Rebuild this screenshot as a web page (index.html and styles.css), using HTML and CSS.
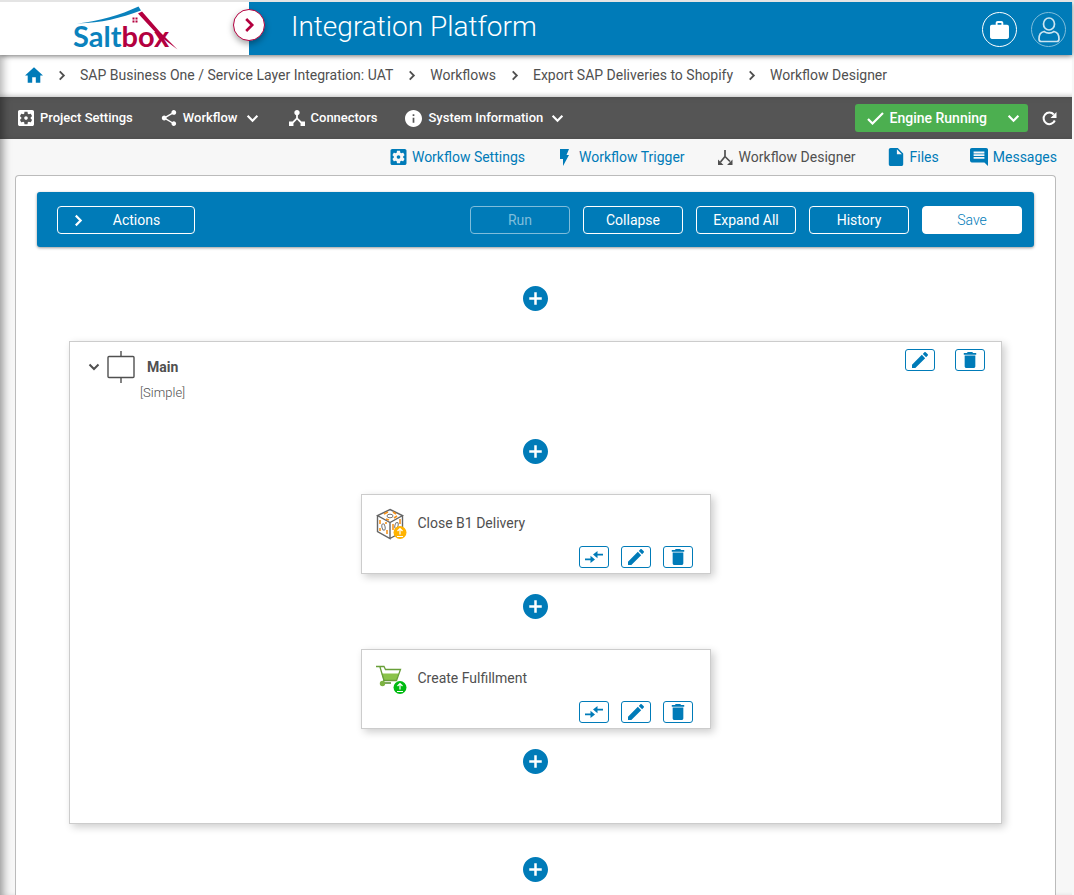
FILE: index.html
```html
<!DOCTYPE html>
<html lang="en">
<head>
  <meta charset="UTF-8">
  <meta name="viewport" content="width=device-width, initial-scale=1.0">
  <title>Workflow Designer - Integration Platform</title>
  <link rel="stylesheet" href="styles.css">
</head>
<body>
  <!-- shared icons -->
  <svg class="sprite" aria-hidden="true">
    <symbol id="i-settings" viewBox="3 3 18 18"><path d="M12 10c-1.1 0-2 .9-2 2s.9 2 2 2 2-.9 2-2-.9-2-2-2zm7-7H5c-1.11 0-2 .9-2 2v14c0 1.1.89 2 2 2h14c1.11 0 2-.9 2-2V5c0-1.1-.89-2-2-2zm-1.75 9c0 .23-.02.46-.05.68l1.48 1.16c.13.11.17.3.08.45l-1.4 2.42c-.09.15-.27.21-.43.15l-1.74-.7c-.36.28-.76.51-1.18.69l-.26 1.85c-.03.17-.18.3-.35.3h-2.8c-.17 0-.32-.13-.35-.29l-.26-1.85c-.43-.18-.82-.41-1.18-.69l-1.74.7c-.16.06-.34 0-.43-.15l-1.4-2.42c-.09-.15-.05-.34.08-.45l1.48-1.16c-.03-.23-.05-.46-.05-.69 0-.23.02-.46.05-.68l-1.48-1.16c-.13-.11-.17-.3-.08-.45l1.4-2.42c.09-.15.27-.21.43-.15l1.74.7c.36-.28.76-.51 1.18-.69l.26-1.85c.03-.17.18-.3.35-.3h2.8c.17 0 .32.13.35.29l.26 1.85c.43.18.82.41 1.18.69l1.74-.7c.16-.06.34 0 .43.15l1.4 2.42c.09.15.05.34-.08.45l-1.48 1.16c.03.23.05.46.05.69z"/></symbol>
    <symbol id="i-edit" viewBox="3 3 18 18"><path d="M3 17.25V21h3.75L17.81 9.94l-3.75-3.75L3 17.25zM20.71 7.04c.39-.39.39-1.02 0-1.41l-2.34-2.34c-.39-.39-1.02-.39-1.41 0l-1.83 1.83 3.75 3.75 1.83-1.83z"/></symbol>
    <symbol id="i-delete" viewBox="3 3 18 18"><path d="M6 19c0 1.1.9 2 2 2h8c1.1 0 2-.9 2-2V7H6v12zM19 4h-3.5l-1-1h-5l-1 1H5v2h14V4z"/></symbol>
    <symbol id="i-map" viewBox="0 0 18 12"><path d="M0 7.6h5.500V4.800L10 8.400 5.500 12V9.200H0zM18 2.800h-5.500V0L8 3.600l4.500 3.600V4.400H18z"/></symbol>
    <symbol id="i-down" viewBox="0 0 12 12"><path d="M1.500 3.500 6 8l4.500-4.500" fill="none" stroke="currentColor" stroke-width="2"/></symbol>
    <symbol id="i-right" viewBox="0 0 8 12"><path d="M1.500 1.500 6 6l-4.500 4.500" fill="none" stroke="currentColor" stroke-width="2"/></symbol>
    <symbol id="i-plus" viewBox="2 2 20 20"><path d="M12 2C6.480 2 2 6.480 2 12s4.480 10 10 10 10-4.480 10-10S17.520 2 12 2zm5 11h-4v4h-2v-4H7v-2h4V7h2v4h4v2z"/></symbol>
  </svg>

  <header class="top">
    <a class="logo" href="#" aria-label="Saltbox">
      <svg width="110" height="50" viewBox="70 5 110 50">
        <text class="logo-text" x="73" y="47"><tspan class="logo-blue">Salt</tspan><tspan class="logo-red">box</tspan></text>
        <path class="logo-blue" d="M77 23.500C100 21 120 15 138.500 6.500L141 10.500C120 18 102 23 77 23.500z"/>
        <path class="logo-red" d="M138 13.500 142 11.500 160 32 177.500 49.500 157 34z"/>
        <path class="logo-red" d="M132.500 17.500h2v2h-2zM135.500 17.500h2v2h-2zM132.500 20.500h2v2h-2zM135.500 20.500h2v2h-2z"/>
      </svg>
    </a>
    <div class="brand">
      <button class="expand" type="button" aria-label="Expand menu"><svg width="11" height="16"><use href="#i-right"/></svg></button>
      <h1>Integration Platform</h1>
      <button class="round" type="button" aria-label="Workspace">
        <svg width="19" height="18" viewBox="2 2 20 19"><path d="M20 6h-4V4c0-1.110-.89-2-2-2h-4c-1.110 0-2 .89-2 2v2H4c-1.110 0-2 .89-2 2v11c0 1.110.89 2 2 2h16c1.110 0 2-.89 2-2V8c0-1.110-.89-2-2-2zm-6 0h-4V4h4v2z"/></svg>
      </button>
      <button class="round user" type="button" aria-label="Account">
        <svg width="24" height="26" viewBox="0 0 24 26" fill="none" stroke="currentColor" stroke-width="1.700"><ellipse cx="12" cy="7" rx="5.500" ry="6"/><path d="M7 14.500c-3 .5-5 3.500-5 7.500 0 1.500.8 2.500 2.300 2.500h15.400c1.500 0 2.300-1 2.300-2.500 0-4-2-7-5-7.500-3 2-7 2-10 0z"/></svg>
      </button>
    </div>
  </header>

  <div class="page">
    <nav class="crumbs" aria-label="Breadcrumb">
      <a href="#" aria-label="Home"><svg width="18" height="16" viewBox="2 3 20 17"><path d="M10 20v-6h4v6h5v-8h3L12 3 2 12h3v8z"/></svg></a>
      <svg class="sep" width="8" height="11"><use href="#i-right"/></svg>
      <a href="#">SAP Business One / Service Layer Integration: UAT</a>
      <svg class="sep" width="8" height="11"><use href="#i-right"/></svg>
      <a href="#">Workflows</a>
      <svg class="sep" width="8" height="11"><use href="#i-right"/></svg>
      <a href="#">Export SAP Deliveries to Shopify</a>
      <svg class="sep" width="8" height="11"><use href="#i-right"/></svg>
      <span>Workflow Designer</span>
    </nav>

    <div class="menu">
      <button type="button"><svg width="16" height="16"><use href="#i-settings"/></svg>Project Settings</button>
      <button type="button"><svg width="16" height="16" viewBox="3 2 18 20"><path d="M18 16.080c-.76 0-1.440.3-1.960.77L8.910 12.700c.05-.23.09-.46.09-.7s-.04-.47-.09-.7l7.050-4.110c.54.5 1.250.81 2.040.81 1.660 0 3-1.340 3-3s-1.340-3-3-3-3 1.340-3 3c0 .24.04.47.09.7L8.040 9.810C7.500 9.310 6.790 9 6 9c-1.660 0-3 1.340-3 3s1.340 3 3 3c.79 0 1.500-.31 2.040-.81l7.120 4.160c-.05.21-.08.43-.08.65 0 1.610 1.310 2.920 2.920 2.920s2.920-1.310 2.920-2.920-1.310-2.920-2.920-2.920z"/></svg>Workflow<svg class="caret" width="13" height="13"><use href="#i-down"/></svg></button>
      <button type="button"><svg width="16" height="16" viewBox="3 3 18 18"><path d="M17 16l-4-4V8.820C14.160 8.400 15 7.300 15 6c0-1.660-1.340-3-3-3S9 4.340 9 6c0 1.300.84 2.400 2 2.820V12l-4 4H3v5h5v-3.050l4-4.200 4 4.200V21h5v-5h-4z"/></svg>Connectors</button>
      <button type="button"><svg width="17" height="17" viewBox="2 2 20 20"><path d="M12 2C6.480 2 2 6.480 2 12s4.480 10 10 10 10-4.480 10-10S17.520 2 12 2zm1 15h-2v-6h2v6zm0-8h-2V7h2v2z"/></svg>System Information<svg class="caret" width="13" height="13"><use href="#i-down"/></svg></button>
      <button class="engine" type="button"><svg width="17" height="13" viewBox="0 0 17 13"><path d="M1 7l4.500 4.500L16 1" fill="none" stroke="currentColor" stroke-width="2.200"/></svg>Engine Running<svg class="caret" width="13" height="13"><use href="#i-down"/></svg></button>
      <button class="refresh" type="button" aria-label="Refresh"><svg width="15" height="15" viewBox="0 0 15 15"><path d="M12.800 9.500A5.800 5.800 0 1 1 11.800 3.500" fill="none" stroke="currentColor" stroke-width="2"/><path d="M14.500 1v6h-6z"/></svg></button>
    </div>

    <nav class="tabs" aria-label="Workflow">
      <a href="#"><svg width="17" height="16"><use href="#i-settings"/></svg>Workflow Settings</a>
      <a href="#"><svg width="18" height="18" viewBox="0 0 18 18"><path d="M4 1h9l-2.500 6H13L7 18v-7H4z"/></svg>Workflow Trigger</a>
      <a class="active" href="#" aria-current="page"><svg width="18" height="18" viewBox="0 0 18 18"><path d="M9 2v6.500L4.500 14M9 8.500l5 5" fill="none" stroke="currentColor" stroke-width="1.700"/><path d="M2 11.500V17h5.500zM16.500 11.500V17H11z"/></svg>Workflow Designer</a>
      <a href="#"><svg width="18" height="18" viewBox="3 2 18 20"><path d="M6 2c-1.100 0-2 .9-2 2v16c0 1.100.9 2 2 2h12c1.100 0 2-.9 2-2V8l-6-6H6zm7 7V3.500L18.500 9H13z"/></svg>Files</a>
      <a href="#"><svg width="18" height="18" viewBox="2 2 20 20"><path d="M22 4c0-1.100-.9-2-2-2H4c-1.100 0-2 .9-2 2v12c0 1.100.9 2 2 2h14l4 4zM18 14H6v-2h12v2zm0-3H6V9h12v2zm0-3H6V6h12v2z"/></svg>Messages</a>
    </nav>

    <main class="panel">
      <div class="toolbar">
        <button class="actions" type="button"><svg width="9" height="13"><use href="#i-right"/></svg><span>Actions</span></button>
        <button type="button" disabled>Run</button>
        <button type="button">Collapse</button>
        <button type="button">Expand All</button>
        <button type="button">History</button>
        <button class="save" type="button">Save</button>
      </div>

      <div class="flow">
        <button class="add" type="button" aria-label="Add block"><svg width="25" height="25"><use href="#i-plus"/></svg></button>

        <section class="block">
          <header class="block-head">
            <button class="toggle" type="button" aria-label="Collapse block"><svg width="12" height="12"><use href="#i-down"/></svg></button>
            <svg width="28" height="32" viewBox="0 0 28 32" fill="none" stroke="currentColor" stroke-width="1.400"><rect x="1" y="5.500" width="26" height="21" rx="1"/><path d="M14 0v5.500M14 26.500V32"/></svg>
            <h2>Main</h2>
            <div class="tools">
              <button type="button" aria-label="Edit"><svg width="16" height="16"><use href="#i-edit"/></svg></button>
              <button type="button" aria-label="Delete"><svg width="16" height="16"><use href="#i-delete"/></svg></button>
            </div>
          </header>
          <p class="kind">[Simple]</p>

          <div class="steps">
            <button class="add" type="button" aria-label="Add step"><svg width="25" height="25"><use href="#i-plus"/></svg></button>

            <article class="step">
              <div class="step-name">
                <svg width="32" height="32" viewBox="0 0 32 32" fill="none">
                  <path d="M14 1.500 26.500 7.500 14 14.500 1.500 7.500zM1.500 7.500v16L14 30.500v-16M26.500 7.500v16L14 30.500" stroke="#666" stroke-width="1.400"/>
                  <ellipse cx="14" cy="8" rx="3" ry="1.800" stroke="#777"/>
                  <ellipse cx="7.500" cy="19" rx="1.600" ry="3.200" stroke="#777" transform="rotate(-12 7.500 19)"/>
                  <ellipse cx="20.500" cy="17.500" rx="1.600" ry="3" stroke="#777" transform="rotate(15 20.500 17.500)"/>
                  <path d="M8 6l4-2M10 11l3 1M17 4l3 2M18 10l3-2M4 12v4M4 20v3M10 14v2M11 22v4M17 16v6M24 11v5" stroke="#f7941d" stroke-width="1.600"/>
                  <circle cx="24" cy="24.500" r="6.500" fill="#ffb300"/>
                  <path d="M24 26.500v-6M21.500 23l2.500-2.500L26.500 23M21 28.500h6" stroke="#fff" stroke-width="1.200"/>
                </svg>
                <h3>Close B1 Delivery</h3>
              </div>
              <div class="tools">
                <button type="button" aria-label="Map fields"><svg width="18" height="12"><use href="#i-map"/></svg></button>
                <button type="button" aria-label="Edit"><svg width="16" height="16"><use href="#i-edit"/></svg></button>
                <button type="button" aria-label="Delete"><svg width="16" height="16"><use href="#i-delete"/></svg></button>
              </div>
            </article>

            <button class="add" type="button" aria-label="Add step"><svg width="25" height="25"><use href="#i-plus"/></svg></button>

            <article class="step">
              <div class="step-name">
                <svg width="32" height="32" viewBox="0 0 32 32" fill="none">
                  <path d="M5.500 10.500H23L20.500 17H7.500z" fill="#8bc34a"/>
                  <path d="M0 3.500h8l1.500 3H24.500L20.500 17.500H8L4 4" stroke="#689f38" stroke-width="1.300"/>
                  <path d="M8 17.500 6.500 20H15" stroke="#558b2f" stroke-width="1.300"/>
                  <circle cx="6.500" cy="20.500" r="2.700" fill="#7cb342"/>
                  <circle cx="24" cy="24.500" r="6.500" fill="#0b1"/>
                  <path d="M24 26.500v-6M21.500 23l2.500-2.500L26.500 23M21 28.500h6" stroke="#fff" stroke-width="1.200"/>
                </svg>
                <h3>Create Fulfillment</h3>
              </div>
              <div class="tools">
                <button type="button" aria-label="Map fields"><svg width="18" height="12"><use href="#i-map"/></svg></button>
                <button type="button" aria-label="Edit"><svg width="16" height="16"><use href="#i-edit"/></svg></button>
                <button type="button" aria-label="Delete"><svg width="16" height="16"><use href="#i-delete"/></svg></button>
              </div>
            </article>

            <button class="add" type="button" aria-label="Add step"><svg width="25" height="25"><use href="#i-plus"/></svg></button>
          </div>
        </section>

        <button class="add" type="button" aria-label="Add block"><svg width="25" height="25"><use href="#i-plus"/></svg></button>
      </div>
    </main>
  </div>
</body>
</html>
```
FILE: styles.css
```css
* {
  box-sizing: border-box;
}

body {
  margin: 0;
  padding-right: 2px;
  border-top: 2px solid #e4e4e4;
  background-color: #f7f7f7;
  color: #505050;
  font-family: Roboto, Arial, sans-serif;
  font-size: 14px;
  line-height: 20px;
}

h1, h2, h3, p {
  margin: 0;
}

a {
  color: inherit;
  text-decoration: none;
}

button {
  padding: 0;
  border: none;
  background: none;
  color: inherit;
  font: inherit;
  cursor: pointer;
}

svg {
  display: block;
  flex: none;
  fill: currentColor;
}

svg[fill="none"] {
  fill: none;
}

.sprite {
  position: absolute;
  width: 0;
  height: 0;
}

/* header */
.top {
  display: flex;
  position: relative;
  z-index: 2;
  height: 53px;
  background-color: #fff;
  box-shadow: 0 1px 5px rgba(0, 0, 0, 0.5);
}

.logo {
  width: 249px;
  padding: 3px 0 0 70px;
}

.logo-text {
  font-family: Lato, sans-serif;
  font-size: 29px;
  font-weight: 700;
}

.logo-blue {
  fill: #0a82bd;
}

.logo-red {
  fill: #b3003f;
}

.brand {
  display: flex;
  position: relative;
  flex: 1;
  align-items: center;
  gap: 14px;
  padding: 2px 6px 0 42px;
  background-color: #007bb8;
  color: #fff;
}

.brand h1 {
  flex: 1;
  font-size: 28px;
  font-weight: 300;
  line-height: 34px;
  padding-bottom: 6px;
}

.expand {
  display: flex;
  position: absolute;
  top: 7px;
  left: -16px;
  align-items: center;
  justify-content: center;
  width: 32px;
  height: 32px;
  border: 1px solid #b3003f;
  border-radius: 50%;
  background-color: #fff;
  box-shadow: 0 3px 6px rgba(0, 0, 0, 0.35);
  color: #b3003f;
}

.round {
  display: flex;
  align-items: center;
  justify-content: center;
  width: 35px;
  height: 35px;
  border: 1px solid #fff;
  border-radius: 50%;
}

.user {
  border-color: #7fbddb;
  color: #cce5f1;
}

.page {
  box-shadow: inset 7px 0 8px -4px rgba(0, 0, 0, 0.4);
}

/* breadcrumb */
.crumbs {
  display: flex;
  align-items: center;
  height: 42px;
  padding: 0 0 2px 25px;
  background-color: #fff;
  box-shadow: inset 7px 0 8px -4px rgba(0, 0, 0, 0.3), inset 0 -5px 5px -4px rgba(0, 0, 0, 0.2);
}

.crumbs a:first-child {
  color: #007bb8;
}

.sep {
  margin: 0 14px 0 15px;
}

/* dark menu */
.menu {
  display: flex;
  align-items: center;
  gap: 28px;
  height: 42px;
  padding: 0 15px 0 18px;
  background-color: #555;
  box-shadow: inset 7px 0 8px -4px rgba(0, 0, 0, 0.4);
  color: #fff;
  font-size: 13px;
  font-weight: 500;
}

.menu button {
  display: flex;
  align-items: center;
  gap: 6px;
}

.menu .caret {
  margin: 0 2px;
}

.menu .engine {
  height: 28px;
  margin-left: auto;
  padding: 0 6px 0 12px;
  border-radius: 3px;
  background-color: #4caf50;
  font-size: 14px;
}

.menu .engine .caret {
  margin-left: 14px;
}

.menu .refresh {
  margin-left: -14px;
}

/* tabs */
.tabs {
  display: flex;
  justify-content: flex-end;
  gap: 31px;
  padding: 8px 15px;
  color: #007bb8;
}

.tabs a {
  display: flex;
  align-items: center;
  gap: 5px;
}

.tabs .active {
  color: #505050;
}

/* designer */
.panel {
  margin: 0 16px 0 15px;
  padding: 16px 21px 14px;
  border: 1px solid #bbb;
  border-bottom: none;
  border-radius: 4px 4px 0 0;
  background-color: #fff;
}

.toolbar {
  display: flex;
  gap: 13px;
  padding: 14px 12px 13px 20px;
  border-radius: 3px;
  background-color: #007bb8;
  box-shadow: 0 1px 3px rgba(0, 0, 0, 0.4);
  color: #fff;
}

.toolbar button {
  width: 100px;
  height: 28px;
  border: 1px solid #fff;
  border-radius: 4px;
}

.toolbar .actions {
  display: flex;
  align-items: center;
  width: 138px;
  margin-right: auto;
  padding: 0 16px;
}

.actions span {
  flex: 1;
  padding-left: 12px;
}

.toolbar button:disabled {
  border-color: #7fbddb;
  color: #7fbddb;
}

.toolbar .save {
  background-color: #fff;
  color: #007bb8;
  font-weight: 300;
}

.flow {
  display: flex;
  flex-direction: column;
  align-items: center;
  padding: 39px 32px 0;
}

.add {
  color: #007bb8;
}

.block {
  width: 100%;
  margin: 30px 0 33px;
  padding: 7px 16px 49px;
  border: 1px solid #ccc;
  box-shadow: 3px 3px 8px rgba(0, 0, 0, 0.2);
}

.block-head {
  display: flex;
  align-items: center;
}

.block-head > svg {
  margin-top: 2px;
}

.toggle {
  margin: 2px 7px 0 2px;
}

.block-head h2 {
  margin: 2px 0 0 12px;
  font-size: 14px;
  font-weight: 700;
}

.block-head .tools {
  gap: 20px;
  align-self: flex-start;
  margin-left: auto;
}

.kind {
  padding-left: 54px;
  font-size: 13px;
  font-weight: 300;
}

.tools {
  display: flex;
  gap: 12px;
  color: #007bb8;
}

.tools button {
  display: flex;
  align-items: center;
  justify-content: center;
  width: 30px;
  height: 22px;
  border: 1px solid #007bb8;
  border-radius: 3px;
  background-color: #fff;
}

.steps {
  display: flex;
  flex-direction: column;
  align-items: center;
  padding-top: 36px;
}

.step {
  width: 350px;
  height: 80px;
  margin: 30px 0 20px;
  padding: 13px 17px 5px 14px;
  border: 1px solid #ccc;
  background-color: #fff;
  box-shadow: 3px 3px 8px rgba(0, 0, 0, 0.2);
}

.step-name {
  display: flex;
  gap: 10px;
}

.step-name h3 {
  padding-top: 5px;
  font-size: 14px;
  font-weight: 400;
}

.step .tools {
  justify-content: flex-end;
  margin-top: 6px;
}
```
